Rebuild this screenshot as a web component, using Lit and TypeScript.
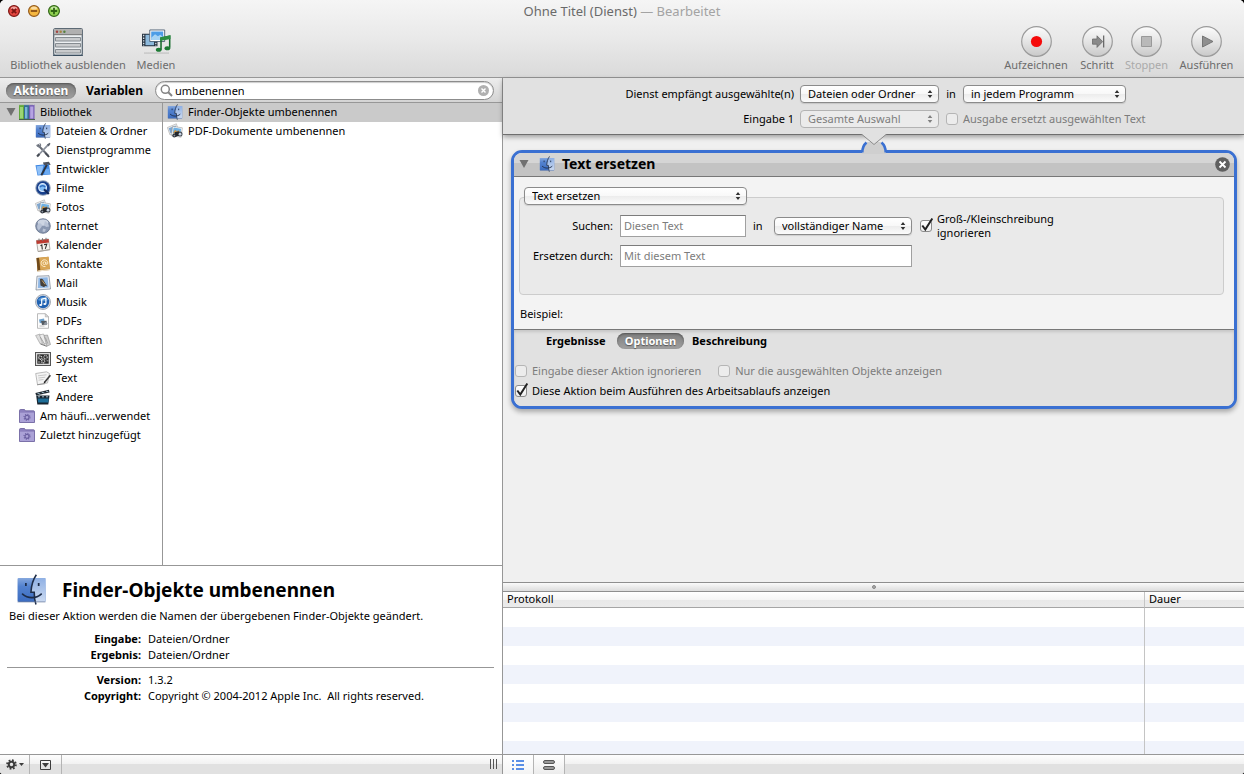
import { LitElement, html, svg, css, nothing, TemplateResult } from "lit";
import { customElement, property, state } from "lit/decorators.js";
import { classMap } from "lit/directives/class-map.js";

const finder = svg`
  <defs>
    <linearGradient id="fl" x1="0" y1="0" x2="0" y2="1"><stop offset="0" stop-color="#86a8de"/><stop offset=".35" stop-color="#5382cf"/><stop offset="1" stop-color="#3b6cc0"/></linearGradient>
    <linearGradient id="fr" x1="0" y1="0" x2="0" y2="1"><stop offset="0" stop-color="#8fb0e4"/><stop offset="1" stop-color="#cbdaf1"/></linearGradient>
  </defs>
  <rect x=".8" y="2" width="14.400" height="12.400" rx=".6" fill="url(#fl)"/>
  <path d="M9.600 2h5.600v12.400H9.800c-.3-1.500-.4-3-.4-4.600H7.600C7.700 6.800 8.400 4 9.600 2z" fill="url(#fr)"/>
  <path d="M10.500.4C8.700 3 7.900 5.900 7.700 9.400h1.700c0 2.100.2 4.300.9 6.300" fill="none" stroke="#1d2c48" stroke-width=".8"/>
  <path d="M3.400 10.400c2.600 2.300 7 2.400 9.600 0" fill="none" stroke="#1d2c48" stroke-width=".9" stroke-linecap="round"/>
  <path d="M5.100 4.600v1.600M11.700 4.600v1.600" stroke="#1d2c48" stroke-width=".9"/>
  <path d="M.8 14.400h14.400" stroke="#6d7f9f" stroke-width=".4"/>`;

const icons: Record<string, TemplateResult> = {
  finder,
  library: svg`
    <path d="M0 1.500l1-1 1 1 1-1 1 1 1-1V15.500H0z" fill="#62a83c"/><rect x="1" y="3" width="3" height="11.500" fill="#9cd474"/>
    <path d="M5 1.500l1-1 1 1 1-1 1 1 1-1v15H5z" fill="#356d94"/><rect x="6" y="3" width="2.400" height="11.500" fill="#79b6d8"/>
    <path d="M10 1.500l1-1 1 1 1-1 1 1 1.500-1v15H10z" fill="#7058b0"/><rect x="11.200" y="2.500" width="3.200" height="12" fill="#b5a3e2"/>
    <path d="M0 15.500h16" stroke="#47604a" stroke-width="1"/>`,
  tools: svg`
    <path d="M2.500 2.500l11 11.500" stroke="#666b75" stroke-width="2"/><path d="M13.600 2.300L3 13.500" stroke="#8d939e" stroke-width="1.800"/>
    <path d="M1 2.500l2 1.600 1.800-.8-.4-2.200c1.900.4 2.300 2.600 1.300 3.900C4.300 6.300 1.400 5.300 1 2.500z" fill="#777d88"/>
    <path d="M10.800 10.500l4 3.900-1.400 1.200-3.800-4zM1.300 13.700l2.300-2.500 1.600 1.500-2.300 2.600z" fill="#454a53"/>
    <path d="M12 2.700L14.400.7l1.100 1-1.800 2.700z" fill="#5b616c"/>`,
  dev: svg`
    <path d="M.5 4.200L14 3l1.500 10.500L2.500 14.500z" fill="#3f87e2"/><path d="M1.500 5.300l7-.7-2.300 8.900-3.300.3z" fill="#8fc0f7"/><path d="M10.500 8l3.800-.3.700 5.200-6 .5z" fill="#6cabf2"/>
    <path d="M12 3.500L6.300 14.300" stroke="#2c3440" stroke-width="1.900"/><path d="M7.900 1.500l6-.8 1.800 3-1.700.4-1-1-1.900 1.500-2.300-.9z" fill="#4b515c"/>`,
  film: svg`
    <circle cx="8" cy="8" r="7.700" fill="#8b9bb4"/><circle cx="8" cy="8" r="6.700" fill="#173f8c"/>
    <circle cx="7.600" cy="7.600" r="3.900" fill="#82bdf5" stroke="#dceafc" stroke-width="1.200"/><path d="M5 7.200c1-2 4.200-2 5.200 0" fill="none" stroke="#2f6bbd" stroke-width="1.500"/>
    <path d="M9 9.300l4.800 4.700" stroke="#132a5c" stroke-width="2.200"/>`,
  photos: svg`
    <path d="M.4 4.500l9-3.700 2.200 7.500L3 12z" fill="#f2f2f2" stroke="#a2a2a2" stroke-width=".6"/><path d="M1.700 5.200l6.900-2.800 1.500 5-6.600 3z" fill="#7fa6cf"/>
    <path d="M5.600 3.400l9.700 1.400-1.200 9.400-9.600-1.500z" fill="#fff" stroke="#999" stroke-width=".6"/><path d="M6.500 4.600l7.600 1.100-.8 5.900-7.500-1.100z" fill="#6fb1e4"/>
    <path d="M5.900 10.300l2.200-3.500 1.800 1.500 1.800-1.100 1.700 3.900z" fill="#c99449"/>
    <circle cx="7.300" cy="12.400" r="2" fill="#2f343c"/><circle cx="13" cy="11" r="2.500" fill="#454b54"/><path d="M7.700 9.300l4-1 1.400 3.600-4.600 2z" fill="#23272e"/>
    <circle cx="13" cy="11.200" r="1.400" fill="#c9d5e3"/><circle cx="7.400" cy="12.600" r=".9" fill="#8b96a4"/>`,
  globe: svg`
    <circle cx="8" cy="8" r="7.300" fill="#8997b1" stroke="#65728c" stroke-width=".8"/><ellipse cx="8" cy="4.600" rx="5.300" ry="3.200" fill="#e4eaf4" opacity=".75"/>
    <path d="M3 6c2-2 4 0 4 1.500S4.500 11 4 12.500C2 11 1.500 8 3 6zM10 3l3 2.500 1 3-3 .6-2-2.600zM8 10.500l3 1-1.500 2.500-2-.6z" fill="#b9c3d6"/>`,
  calendar: svg`
    <path d="M1.500 3.500l12-1.500 1.500 10.500L3 14.500z" fill="#f6f3ee" stroke="#8d8a85" stroke-width=".7"/>
    <path d="M1.300 3.600l12.200-1.600.5 3.500-12.200 1.600z" fill="#bd3b31"/><path d="M4 1.600v2.500M7.500 1.200v2.500M11 .8v2.500" stroke="#777" stroke-width="1"/>
    <path d="M5.500 8.700l1.300-.8.500 4.600M9 7.600l2.800-.4-1.500 4.700" fill="none" stroke="#33302d" stroke-width="1.100"/>
    <path d="M3 14.600l12-1.900" stroke="#a9a49c"/>`,
  contacts: svg`
    <path d="M1.500 2l12-1.200L15 14 2.500 15.500z" fill="#b9802f"/><path d="M4 1.800l9.500-1 1.300 12-9.600 1.200z" fill="#d9a656"/><path d="M1.500 2l2.500-.2 1.300 12.200-2.600 1.200z" fill="#6f4a1c"/>
    <path d="M3 15l12-1.400" stroke="#f3ead8"/><circle cx="9.400" cy="7.200" r="1.400" fill="none" stroke="#fff1d2" stroke-width=".9"/>
    <path d="M10.900 5.800v2c.4 1.200 1.900.7 1.800-1C12.600 4.800 11 3.700 9.200 3.800 7.300 3.900 6 5.500 6.100 7.500c.1 2.100 2 3.500 4.400 3" fill="none" stroke="#fff1d2" stroke-width=".9"/>`,
  mail: svg`
    <path d="M2 1.200l12-.5L15.500 14 1 15z" fill="#e9edf3" stroke="#78828f" stroke-width=".7"/><path d="M3.400 2.700l9.200-.4 1 10.200-10.700.6z" fill="#8eb6e4"/>
    <path d="M5 4.200c1.700-1 3-.4 3.800 1.500l3.400 5.600-2.100-.4-1 1.300-3.600-1.700z" fill="#45403a"/><path d="M7 5.400l3 4" stroke="#c7a067"/>`,
  music: svg`
    <circle cx="8" cy="8" r="7.500" fill="#d3d8e0" stroke="#8b929e" stroke-width=".7"/><circle cx="8" cy="8" r="6.200" fill="#2062b2"/>
    <path d="M3 6c2-3.700 8-3.700 10 0-2 1.500-8 1.500-10 0z" fill="#6faee6" opacity=".7"/>
    <path d="M6.700 10.800V5.100l4.200-1v5.600" fill="none" stroke="#fff" stroke-width="1.200"/><ellipse cx="5.700" cy="11" rx="1.500" ry="1.100" fill="#fff"/><ellipse cx="9.800" cy="10" rx="1.500" ry="1.100" fill="#fff"/>`,
  pdf: svg`
    <path d="M2.500.7h7.800l3.200 3.200v11.400h-11z" fill="#fdfdfd" stroke="#aaa" stroke-width=".8"/><path d="M10.300.7v3.200h3.200z" fill="#ddd" stroke="#aaa" stroke-width=".6"/>
    <path d="M4 6.500l5-1 .8 3.800-5 1z" fill="#6ba0cc"/><path d="M6 7.900l5.500-.2.500 3.900-5 .3z" fill="#555b62"/><circle cx="10.800" cy="10.600" r="1.600" fill="#8d959f"/><path d="M4.500 13h5" stroke="#bbb"/>`,
  fonts: svg`
    <path d="M.6 3.500L5 2l3.500 8.500-3.300 1.400z" fill="#dedede" stroke="#999" stroke-width=".6"/><path d="M4.500 3l4-1 3.700 9-4 1.800z" fill="#ededed" stroke="#999" stroke-width=".6"/>
    <path d="M9 3.500l3.500-.5 3 9.500-3.600 1.700z" fill="#cfcfcf" stroke="#8b8b8b" stroke-width=".6"/><path d="M5.300 5l4.500 7.500M10.300 5.500l2.400 6" stroke="#979797" stroke-width=".8"/><path d="M5.500 12l2.700 1 3.600 1.300" stroke="#777" fill="none"/>`,
  system: svg`
    <rect x=".5" y="1.500" width="15" height="13" fill="#dcdcdc" stroke="#555" stroke-width="1"/><rect x="2.300" y="3.300" width="11.400" height="9.400" fill="#2b2b2b"/>
    <circle cx="5.300" cy="6.700" r="1.600" fill="none" stroke="#d2d2d2" stroke-width="1.300" stroke-dasharray="1 .5"/><circle cx="10.500" cy="6.200" r="1.700" fill="none" stroke="#b5b5b5" stroke-width="1.300" stroke-dasharray="1 .5"/><circle cx="8.200" cy="10.200" r="1.600" fill="none" stroke="#ccc" stroke-width="1.300" stroke-dasharray="1 .5"/><path d="M3 11h2.300M11.500 9.800h2M3.500 4.200H5" stroke="#a5a5a5"/>`,
  text: svg`
    <path d="M.7 3.500L11.500 1.800l3 1.700-2 9.500L2.500 14.700z" fill="#f4f4f4" stroke="#a0a0a0" stroke-width=".7"/><path d="M3 5.800l8.500-1M3.300 8l7-.8M3.500 10.200l5-.7" stroke="#bcbcbc" stroke-width=".8"/>
    <path d="M15.400 5.200l-6 7.400" stroke="#3b3b3b" stroke-width="1.600"/><path d="M9.700 11.600l-1.500 2 2.200-1.200z" fill="#111"/><path d="M2 14.800l8-1.100" stroke="#888" stroke-width=".8"/>`,
  clapper: svg`
    <path d="M1.200 6.500h13.300L13.300 15.500H2.300z" fill="#17242f"/><path d="M2.700 9.500h11l-.3 4H3.100z" fill="#1d6d97"/><path d="M.4 3.900l13.500-3.200.7 2.700L1.200 6.500z" fill="#222c34"/>
    <path d="M2.500 4.300l2.700.8M6.700 3.200l2.700.8M11 2.200l2.300.6M3 7.800h2M7 7.800h2M11 7.800h2" stroke="#9fb9c8" stroke-width="1"/>`,
  smart: svg`
    <path d="M.5 2.700c0-.8.3-1.200 1-1.200h4l1 1.300h8c.7 0 1 .4 1 1v10.700H.5z" fill="#8c80be" stroke="#685d9c" stroke-width=".8"/><path d="M1 4.700h14v9.300H1z" fill="#aba2d7"/>
    <circle cx="8" cy="9.300" r="2" fill="none" stroke="#6a5fa0" stroke-width="1.200"/><circle cx="8" cy="9.300" r="3" fill="none" stroke="#6a5fa0" stroke-width="1.100" stroke-dasharray="1.100 1.260"/>`,
};

const icon = (name: string, size = 16) =>
  html`<svg class="icon" width=${size} height=${size} viewBox="0 0 16 16" aria-hidden="true">${icons[name]}</svg>`;

const CATEGORIES: [string, string][] = [
  ["finder", "Dateien & Ordner"],
  ["tools", "Dienstprogramme"],
  ["dev", "Entwickler"],
  ["film", "Filme"],
  ["photos", "Fotos"],
  ["globe", "Internet"],
  ["calendar", "Kalender"],
  ["contacts", "Kontakte"],
  ["mail", "Mail"],
  ["music", "Musik"],
  ["pdf", "PDFs"],
  ["fonts", "Schriften"],
  ["system", "System"],
  ["text", "Text"],
  ["clapper", "Andere"],
];

@customElement("mac-popup")
class MacPopup extends LitElement {
  @property() value = "";
  @property() label = "";
  @property({ type: Boolean }) disabled = false;

  static styles = css`
    :host { display: grid; }
    select, svg { grid-area: 1 / 1; }
    select {
      appearance: none; box-sizing: border-box; height: 18px; width: 100%; margin: 0; padding: 0 20px 0 7px;
      border: 1px solid #8b8b8b; border-radius: 4px; color: #000;
      background: linear-gradient(#fff, #f8f8f8 50%, #ececec 50%, #fbfbfb);
      box-shadow: 0 1px 1px rgba(0, 0, 0, 0.12);
      font: 11px/16px "Noto Sans", sans-serif;
    }
    select:disabled { color: #7d7d7d; border-color: #b3b3b3; background: #ebebeb; opacity: 1; box-shadow: none; }
    svg { align-self: center; justify-self: end; margin-right: 6px; pointer-events: none; fill: #333; }
    select:disabled + svg { fill: #808080; }
  `;

  render() {
    return html`<select aria-label=${this.label} ?disabled=${this.disabled}><option>${this.value}</option></select>
      <svg width="6" height="8" viewBox="0 0 6 8"><path d="M3 0l2.300 3H.7zM3 8L.7 5h4.600z" /></svg>`;
  }
}

@customElement("mac-check")
class MacCheck extends LitElement {
  @property() label = "";
  @property({ type: Boolean }) checked = false;
  @property({ type: Boolean }) disabled = false;

  static styles = css`
    :host { display: block; }
    label { display: flex; align-items: center; gap: 5px; font: 11px/14px "Noto Sans", sans-serif; white-space: pre; }
    .box { display: grid; width: 12px; height: 12px; }
    input, svg { grid-area: 1 / 1; }
    input {
      appearance: none; box-sizing: border-box; margin: 0; width: 12px; height: 12px;
      border: 1px solid #8c8c8c; border-radius: 3px; background: linear-gradient(#fff, #eee);
    }
    input:disabled { border-color: #b5b5b5; background: #ececec; }
    svg { overflow: visible; pointer-events: none; }
    .off { color: #7c7c7c; }
  `;

  private toggle(e: Event) {
    this.checked = (e.target as HTMLInputElement).checked;
  }

  render() {
    const tick = html`<svg width="12" height="12" viewBox="0 0 12 12"><path d="M2.300 5.500l3 4L12.300-1.500" fill="none" stroke="#222" stroke-width="2" /></svg>`;
    return html`<label class=${classMap({ off: this.disabled })}><span class="box"><input type="checkbox" .checked=${this.checked} ?disabled=${this.disabled} @change=${this.toggle} />${this.checked ? tick : nothing}</span><span>${this.label}</span></label>`;
  }
}

@customElement("app-root")
class AppRoot extends LitElement {
  @state() private query = "umbenennen";

  static styles = css`
    :host { display: block; height: 100vh; background: #000; color: #000; font: 11px/16px "Noto Sans", sans-serif; }
    * { box-sizing: border-box; }
    button { appearance: none; border: 0; margin: 0; padding: 0; background: none; color: inherit; font: inherit; text-align: left; white-space: nowrap; }
    ul, dl, h1, h2, p { margin: 0; padding: 0; list-style: none; }
    svg { display: block; flex: none; }
    .window { display: flex; flex-direction: column; height: 100%; overflow: hidden; border-radius: 5px 5px 3px 3px; background: #fff; }

    .top { flex: none; background: linear-gradient(#f5f5f5, #e9e9e9 50%, #dadada); border-bottom: 1px solid #979797; }
    .titlebar { display: grid; grid-template-columns: 1fr auto 1fr; align-items: center; height: 22px; padding: 0 8px; }
    .lights { display: flex; gap: 8px; }
    .titlebar h1 { font: 13px/18px "Noto Sans", sans-serif; color: #6a6a6a; white-space: pre; }
    .titlebar h1 span { color: #a3a3a3; }
    .tools { display: flex; justify-content: space-between; height: 55px; padding: 4px 10px 0 9px; color: #6c6c6c; }
    .group { display: flex; gap: 10px; }
    .group.run { gap: 11px; }
    .tool { display: flex; flex-direction: column; align-items: center; height: 47px; }
    .tool .pic { display: flex; align-items: center; height: 31px; }
    .tool.lib { width: 118px; }
    .tool.med { width: 38px; }
    .tool.rec { width: 66px; }
    .tool.step { width: 34px; }
    .tool.stop { width: 43px; color: #aaa; }
    .tool.go { width: 55px; }

    .main { flex: 1; min-height: 0; display: grid; grid-template-columns: 503px minmax(0, 1fr); }
    .left { display: flex; flex-direction: column; min-height: 0; border-right: 1px solid #979797; }
    .filter { display: flex; align-items: center; height: 25px; padding: 1px 8px 0 6px; background: linear-gradient(#ededed, #d4d4d4); border-bottom: 1px solid #979797; font-weight: 700; font-size: 12px; }
    .pill { border-radius: 9px; color: #fff; text-align: center; background: linear-gradient(#7d7d7d, #a0a0a0); box-shadow: inset 0 1px 2px #555; text-shadow: 0 1px 1px #555; }
    .filter .pill { width: 70px; height: 16px; }
    .filter .vars { width: 58px; margin: 0 11px 0 10px; }
    .search { flex: 1; display: flex; align-items: center; gap: 2px; height: 19px; padding: 0 4px; border: 1px solid #8c8c8c; border-radius: 10px; background: #fff; box-shadow: inset 0 1px 1px #ccc; }
    .search input { flex: 1; min-width: 0; border: 0; padding: 0; outline: 0; background: none; font: 11px/16px "Noto Sans", sans-serif; }
    .lists { flex: 1; display: grid; grid-template-columns: 163px minmax(0, 1fr); min-height: 0; overflow: hidden; }
    .tree { border-right: 1px solid #979797; overflow: hidden; }
    .row { display: flex; align-items: center; gap: 5px; width: 100%; height: 19px; padding: 0 0 1px 19px; }
    .row.root { padding-left: 6px; gap: 3px; }
    .row.root .icon { margin-right: 2px; }
    .row.child { padding-left: 35px; }
    .row.hit { padding-left: 4px; }
    .selected { background: #cacaca; }

    .info { flex: none; height: 189px; padding: 7px 8px 0 7px; border-top: 1px solid #979797; }
    .info header { display: flex; align-items: center; gap: 15px; height: 34px; padding: 0 0 1px 9px; }
    .info h2 { font: 700 19px/24px "Noto Sans", sans-serif; }
    .info p { padding: 1px 2px 0; }
    .facts { display: grid; grid-template-columns: 134px 1fr; column-gap: 7px; padding: 7px 0 4px; white-space: pre; }
    .facts + .facts { border-top: 1px solid #979797; padding-top: 4px; }
    .facts dt { font-weight: 700; text-align: right; }
    .facts dd { margin: 0; }
    .bar { flex: none; display: flex; height: 20px; border-top: 1px solid #979797; background: linear-gradient(#fdfdfd, #f1f1f1 50%, #e1e1e1 50%, #e1e1e1); }
    .bar button { display: flex; align-items: center; justify-content: center; gap: 2px; width: 31px; border-right: 1px solid #b4b4b4; }
    .bar .menu { width: 30px; }
    .bar .view { background: linear-gradient(#fff, #ececec); }
    .bar .on { background: linear-gradient(#fff, #f4f4f4); }
    .bar .cell { width: 32px; }
    .grip { margin: 4px 5px 0 auto; }

    .right { display: flex; flex-direction: column; min-width: 0; min-height: 0; }
    .service { flex: none; display: grid; justify-content: center; align-content: start; align-items: center; grid-template-columns: 173px 139px 12px 163px; grid-auto-rows: 18px; gap: 7px 6px; height: 57px; padding-top: 7px; background: #e1e1e1; border-bottom: 1px solid #6f6f6f; white-space: nowrap; z-index: 1; box-shadow: 0 2px 5px rgba(0, 0, 0, 0.35); }
    .service .cap { text-align: right; }
    .service .mid { text-align: center; }
    .service mac-check { grid-column: 3 / 5; margin-left: 1px; }
    .canvas { flex: 1; min-height: 0; position: relative; padding: 15px 7px 0 8px; background: #f0f0f0; }
    .notch { position: absolute; top: -1px; left: 50%; margin-left: -15px; z-index: 2; }
    .card { border: 3px solid #3a70d2; border-radius: 11px; overflow: hidden; background: #f3f3f3; box-shadow: 0 3px 5px rgba(0, 0, 0, 0.3); }
    .card .head { display: flex; align-items: center; height: 24px; padding: 0 4px 1px 5px; border-bottom: 1px solid #777; background: linear-gradient(#d5d5d5 45%, #c3c3c3 45%); }
    .card .head .icon { margin: 0 7px 0 10px; }
    .card h2 { flex: 1; font: 700 14px/20px "Noto Sans", sans-serif; }
    .body { height: 152px; padding: 10px 10px 0 5px; }
    .kind { width: 223px; margin-left: 5px; position: relative; z-index: 1; }
    .params { height: 98px; margin-top: -8px; padding: 17px 0 0 5px; border: 1px solid #ccc; border-radius: 4px; background: #eaeaea; display: grid; grid-template-columns: 88px 126px 14px 138px auto; grid-template-rows: 22px 22px; gap: 8px 7px; align-items: center; align-content: start; white-space: nowrap; justify-content: start; }
    .params .cap { text-align: right; }
    .params input { width: 100%; height: 22px; border: 1px solid #a0a0a0; border-top-color: #7c7c7c; padding: 0 3px 2px; background: #fff; font: 11px/16px "Noto Sans", sans-serif; }
    .params input::placeholder { color: #7c7c7c; opacity: 1; }
    .params .wide { grid-column: 2 / 5; }
    .params .case { margin-left: 1px; }
    .sample { padding: 11px 1px 0; }
    .opts { height: 77px; padding: 3px 2px 0 1px; background: #e1e1e1; border-top: 1px solid #777; box-shadow: inset 0 2px 3px rgba(0, 0, 0, 0.12); }
    .tabs { display: flex; gap: 8px; padding-left: 31px; font-weight: 700; }
    .tabs .first { width: 63px; }
    .tabs .pill { width: 67px; height: 16px; }
    .checks { display: flex; gap: 17px; padding: 15px 0 6px; }

    .split { flex: none; display: flex; align-items: center; justify-content: center; height: 10px; border: solid #8e8e8e; border-width: 1px 0; background: linear-gradient(#fafafa, #dcdcdc); }
    .split i { width: 4px; height: 4px; border-radius: 50%; background: #aaa; border: 1px solid #888; }
    .log { flex: none; height: 162px; overflow: hidden; }
    table { width: 100%; border-collapse: separate; border-spacing: 0; table-layout: fixed; }
    th { height: 16px; padding: 0 4px 1px; font-weight: 400; line-height: 14px; text-align: left; border-bottom: 1px solid #a5a5a5; background: linear-gradient(#fff, #f5f5f5 50%, #e8e8e8 50%, #ebebeb); }
    td { height: 19px; padding: 0; }
    th + th, td + td { width: 100px; border-left: 1px solid #c4c4c4; }
    tbody tr:nth-child(even) { background: #f0f3fb; }
  `;

  private light(name: string, color: string, ring: string, mark: string) {
    return html`<button aria-label=${name}><svg width="12" height="12" viewBox="0 0 12 12">
      <circle cx="6" cy="6" r="5.400" fill=${color} stroke=${ring} stroke-width="1.200" />
      <ellipse cx="6" cy="3" rx="3" ry="1.600" fill="#fff" opacity=".5" />
      <path d=${mark} stroke=${ring} stroke-width="1.800" />
    </svg></button>`;
  }

  private round(cls: string, label: string, glyph: TemplateResult, disabled = false) {
    return html`<button class="tool ${cls}" ?disabled=${disabled}><span class="pic">
      <svg width="31" height="31" viewBox="0 0 31 31">
        <defs><linearGradient id="rg" x1="0" y1="0" x2="0" y2="1"><stop offset="0" stop-color="#fcfcfc" /><stop offset=".55" stop-color="#e2e2e2" /><stop offset="1" stop-color="#c9c9c9" /></linearGradient></defs>
        <circle cx="15.500" cy="15.500" r="14.800" fill="url(#rg)" stroke="#9b9b9b" stroke-width="1.200" />${glyph}
      </svg></span>${label}</button>`;
  }

  private topBar() {
    return html`<header class="top">
      <div class="titlebar">
        <div class="lights">
          ${this.light("Schließen", "#e2463f", "#7c1512", "M3.800 3.800l4.400 4.400M8.200 3.800L3.800 8.200")}
          ${this.light("Minimieren", "#f5b740", "#94591a", "M2.800 6h6.400")}
          ${this.light("Vergrößern", "#8fd150", "#2f6415", "M2.800 6h6.400M6 2.800v6.400")}
        </div>
        <h1>Ohne Titel (Dienst)<span> — Bearbeitet</span></h1>
      </div>
      <div class="tools">
        <div class="group">
          <button class="tool lib"><span class="pic"><svg width="30" height="28" viewBox="0 0 30 28">
            <rect x=".7" y=".7" width="28.600" height="26.600" rx="1.500" fill="#edf0f2" stroke="#5d6a75" stroke-width="1.300" />
            <path d="M1 1h28v6H1z" fill="#b0b0b0" /><path d="M1 6.700h28" stroke="#777" />
            <circle cx="4" cy="3.800" r="1.200" fill="#a5443f" /><circle cx="7.700" cy="3.800" r="1.200" fill="#a8853e" /><circle cx="11.400" cy="3.800" r="1.200" fill="#55803f" />
            <path d="M2.500 9.500h25v3.500h-25zM2.500 15.500h25v3.500h-25zM2.500 21.500h25v3.500h-25z" fill="#c9cbcd" stroke="#868c91" /><path d="M0 27.300h30" stroke="#34495c" />
          </svg></span>Bibliothek ausblenden</button>
          <button class="tool med"><span class="pic"><svg width="29" height="26" viewBox="0 0 30 27">
            <path d="M0 5h16v13H0z" fill="#232f3d" /><path d="M3.500 6h9v11h-9z" fill="#8db9dc" /><path d="M1.700 6v12M14.300 6v12" stroke="#e6edf4" stroke-width="1.300" stroke-dasharray="1.500 1.300" />
            <path d="M8 1h15.500v12H8z" fill="#fff" stroke="#46586d" stroke-width=".9" /><path d="M9.500 2.500h12.500v9H9.500z" fill="#4c9ce6" /><path d="M9.500 9l4-3.500 3 2 2.500-1.500 3 2.500v3H9.500z" fill="#a6d3f4" />
            <path d="M19.700 21.500V9.500L28.700 7.500v12" fill="none" stroke="#176c2c" stroke-width="1.600" /><path d="M18.900 8.500L29.500 6.500v3.800L18.900 12.500z" fill="#2c8d42" />
            <ellipse cx="17.300" cy="21.500" rx="3" ry="2.100" fill="#1d7a34" /><ellipse cx="26.300" cy="20" rx="3" ry="2.100" fill="#1d7a34" /><path d="M2 25h26" stroke="#aaa" stroke-width="1.500" opacity=".5" />
          </svg></span>Medien</button>
        </div>
        <div class="group run">
          ${this.round("rec", "Aufzeichnen", svg`<circle cx="15.500" cy="15.500" r="5.600" fill="#f50a0a"/>`)}
          ${this.round("step", "Schritt", svg`<path d="M10.500 13h4.500V9.800l5.700 5.800-5.700 5.800V18.200h-4.500z" fill="#8a8a8a" stroke="#6a6a6a" stroke-width=".8"/><path d="M21.700 9.500v12" stroke="#555" stroke-width="1.100"/>`)}
          ${this.round("stop", "Stoppen", svg`<path d="M10.500 10.500h10v10h-10z" fill="#b9b9b9" stroke="#999"/>`, true)}
          ${this.round("go", "Ausführen", svg`<path d="M11.500 10l10.500 5.500-10.500 5.500z" fill="#8f8f8f" stroke="#6e6e6e" stroke-width=".9"/>`)}
        </div>
      </div>
    </header>`;
  }

  private library() {
    return html`<section class="left">
      <div class="filter">
        <button class="pill">Aktionen</button><button class="vars">Variablen</button>
        <div class="search">
          <svg width="13" height="13" viewBox="0 0 13 13"><circle cx="5.300" cy="5.300" r="4" fill="none" stroke="#858585" stroke-width="1.500" /><path d="M8.300 8.300l3.700 3.700" stroke="#858585" stroke-width="2" /></svg>
          <input aria-label="Suchen" .value=${this.query} @input=${(e: InputEvent) => (this.query = (e.target as HTMLInputElement).value)} />
          <button aria-label="Löschen" @click=${() => (this.query = "")}><svg width="11" height="11" viewBox="0 0 11 11"><circle cx="5.500" cy="5.500" r="5.500" fill="#b0b0b0" /><path d="M3.500 3.500l4 4M7.500 3.500l-4 4" stroke="#fff" stroke-width="1.400" /></svg></button>
        </div>
      </div>
      <div class="lists">
        <ul class="tree">
          <li><button class="row root selected"><svg width="10" height="8" viewBox="0 0 10 8"><path d="M.5 0h9L5 8z" fill="#717171" /></svg>${icon("library")}Bibliothek</button></li>
          ${CATEGORIES.map(([i, name]) => html`<li><button class="row child">${icon(i)}${name}</button></li>`)}
          <li><button class="row">${icon("smart")}Am häufi…verwendet</button></li>
          <li><button class="row">${icon("smart")}Zuletzt hinzugefügt</button></li>
        </ul>
        <ul>
          <li><button class="row hit selected">${icon("finder")}Finder-Objekte umbenennen</button></li>
          <li><button class="row hit">${icon("photos")}PDF-Dokumente umbenennen</button></li>
        </ul>
      </div>
      <div class="info">
        <header>${icon("finder", 31)}<h2>Finder-Objekte umbenennen</h2></header>
        <p>Bei dieser Aktion werden die Namen der übergebenen Finder-Objekte geändert.</p>
        <dl class="facts"><dt>Eingabe:</dt><dd>Dateien/Ordner</dd><dt>Ergebnis:</dt><dd>Dateien/Ordner</dd></dl>
        <dl class="facts"><dt>Version:</dt><dd>1.3.2</dd><dt>Copyright:</dt><dd>Copyright © 2004-2012 Apple Inc.  All rights reserved.</dd></dl>
      </div>
      <div class="bar">
        <button class="menu" aria-label="Aktionsmenü"><svg width="11" height="11" viewBox="0 0 11 11"><circle cx="5.500" cy="5.500" r="2.700" fill="none" stroke="#3c3c3c" stroke-width="2" /><circle cx="5.500" cy="5.500" r="4.400" fill="none" stroke="#3c3c3c" stroke-width="1.800" stroke-dasharray="1.750 1.706" /></svg><svg width="5" height="3" viewBox="0 0 5 3"><path d="M0 0h5L2.500 3z" fill="#3c3c3c" /></svg></button>
        <button class="cell" aria-label="Beschreibung ausblenden"><svg width="11" height="10" viewBox="0 0 11 10"><path d="M.5.5h10v9H.5z" fill="none" stroke="#3c3c3c" /><path d="M2 3h7L5.500 7.500z" fill="#3c3c3c" /></svg></button>
        <svg class="grip" width="7" height="10" viewBox="0 0 7 10"><path d="M.5 0v10M3.500 0v10M6.500 0v10" stroke="#555" /></svg>
      </div>
    </section>`;
  }

  private workflow() {
    return html`<section class="right">
      <div class="service">
        <span class="cap">Dienst empfängt ausgewählte(n)</span>
        <mac-popup label="Dienst empfängt" value="Dateien oder Ordner"></mac-popup>
        <span class="mid">in</span>
        <mac-popup label="Programm" value="in jedem Programm"></mac-popup>
        <span class="cap">Eingabe 1</span>
        <mac-popup label="Eingabe" value="Gesamte Auswahl" disabled></mac-popup>
        <mac-check label="Ausgabe ersetzt ausgewählten Text" disabled></mac-check>
      </div>
      <div class="canvas">
        <svg class="notch" width="30" height="20" viewBox="0 0 30 20">
          <path d="M3 20c0-6 2-9 5-12h14c3 3 5 6 5 12z" fill="#cfcfcf" />
          <path d="M3.300 18.500C3.300 14 4.500 11 7.500 8.500M26.700 18.500c0-4.500-1.200-7.500-4.200-10" fill="none" stroke="#3a70d2" stroke-width="2.600" />
          <path d="M2.500 0L15 10.500 27.500 0z" fill="#e1e1e1" /><path d="M3 .5L15 10.500 27 .5" fill="none" stroke="#8b8b8b" />
        </svg>
        <article class="card">
          <div class="head">
            <svg width="10" height="8" viewBox="0 0 10 8"><path d="M.5 0h9L5 8z" fill="#717171" /></svg>
            ${icon("finder")}
            <h2>Text ersetzen</h2>
            <button aria-label="Entfernen"><svg width="15" height="15" viewBox="0 0 15 15"><circle cx="7.500" cy="7.500" r="7.300" fill="#5f5f5f" /><path d="M4.500 4.500l6 6M10.500 4.500l-6 6" stroke="#fff" stroke-width="1.800" /></svg></button>
          </div>
          <div class="body">
            <mac-popup class="kind" label="Vorgang" value="Text ersetzen"></mac-popup>
            <div class="params">
              <label class="cap" for="find">Suchen:</label>
              <input id="find" placeholder="Diesen Text" />
              <span class="mid">in</span>
              <mac-popup label="Bereich" value="vollständiger Name"></mac-popup>
              <mac-check class="case" checked label=${"Groß-/Kleinschreibung\nignorieren"}></mac-check>
              <label class="cap" for="repl">Ersetzen durch:</label>
              <input id="repl" class="wide" placeholder="Mit diesem Text" />
            </div>
            <p class="sample">Beispiel:</p>
          </div>
          <div class="opts">
            <div class="tabs"><button class="first">Ergebnisse</button><button class="pill">Optionen</button><button>Beschreibung</button></div>
            <div class="checks">
              <mac-check disabled label="Eingabe dieser Aktion ignorieren"></mac-check>
              <mac-check disabled label="Nur die ausgewählten Objekte anzeigen"></mac-check>
            </div>
            <mac-check checked label="Diese Aktion beim Ausführen des Arbeitsablaufs anzeigen"></mac-check>
          </div>
        </article>
      </div>
      <div class="split"><i></i></div>
      <div class="log"><table>
        <thead><tr><th>Protokoll</th><th>Dauer</th></tr></thead>
        <tbody>${Array.from({ length: 8 }, () => html`<tr><td></td><td></td></tr>`)}</tbody>
      </table></div>
      <div class="bar">
        <button class="view on" aria-label="Protokoll"><svg width="12" height="10" viewBox="0 0 12 10"><path d="M0 1h2M0 5h2M0 9h2M4 1h8M4 5h8M4 9h8" stroke="#5a8fe6" stroke-width="2" /></svg></button>
        <button class="view" aria-label="Variablen"><svg width="12" height="10" viewBox="0 0 12 10"><rect x=".5" y=".5" width="11" height="3" rx="1.500" fill="#999" stroke="#555" /><rect x=".5" y="6.500" width="11" height="3" rx="1.500" fill="#999" stroke="#555" /></svg></button>
      </div>
    </section>`;
  }

  render() {
    return html`<div class="window">${this.topBar()}<main class="main">${this.library()}${this.workflow()}</main></div>`;
  }
}
